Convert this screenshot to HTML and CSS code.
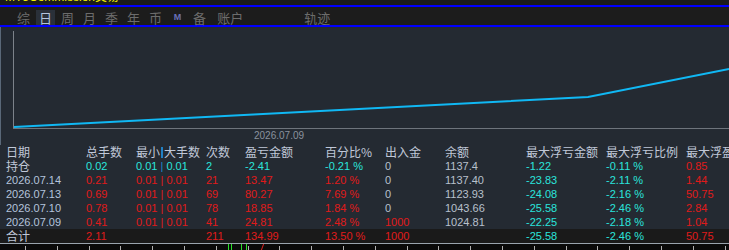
FILE: index.html
```html
<!DOCTYPE html>
<html lang="zh-CN">
<head>
    <meta charset="UTF-8">
    <title>账户轨迹</title>
    <link rel="stylesheet" href="styles.css">
</head>
<body>

    <div class="titlebar"><span class="title-text">MT5Commission交易</span></div>
    <div class="sep"></div>

    <!-- period tabs -->
    <div class="tabs">
        <span class="tab">综</span>
        <span class="tab active">日</span>
        <span class="tab">周</span>
        <span class="tab">月</span>
        <span class="tab">季</span>
        <span class="tab">年</span>
        <span class="tab">币</span>
        <span class="tab tab-m">M</span>
        <span class="tab">备</span>
        <span class="tab tab-acct">账户</span>
        <span class="tab tab-track">轨迹</span>
    </div>
    <div class="sep"></div>

    <!-- equity curve -->
    <div class="chart">
        <svg width="729" height="118" viewBox="0 0 729 118">
            <line x1="13.5" y1="4" x2="13.5" y2="101" stroke="#7c828a" stroke-width="1"/>
            <line x1="13" y1="101.5" x2="729" y2="101.5" stroke="#6e747c" stroke-width="1"/>
            <polyline points="14,100 588,70 729,42" fill="none" stroke="#10b8f4" stroke-width="2"/>
            <text x="254" y="112" class="axis-label">2026.07.09</text>
        </svg>
    </div>

    <!-- daily stats -->
    <div class="table">
        <div class="row head">
            <span>日期</span><span>总手数</span><span>最小<i class="bar">|</i>大手数</span><span>次数</span><span>盈亏金额</span>
            <span>百分比%</span><span>出入金</span><span>余额</span><span>最大浮亏金额</span><span>最大浮亏比例</span><span>最大浮盈金额</span>
        </div>
        <div class="row">
            <span class="cjk">持仓</span><span class="cy">0.02</span><span class="cy">0.01 <i class="bar">|</i> 0.01</span><span class="cy">2</span><span class="cy">-2.41</span>
            <span class="cy">-0.21 %</span><span class="gr">0</span><span class="gr">1137.4</span><span class="cy">-1.22</span><span class="cy">-0.11 %</span><span class="rd">0.85</span>
        </div>
        <div class="row">
            <span class="dt">2026.07.14</span><span class="rd">0.21</span><span class="rd">0.01 | 0.01</span><span class="rd">21</span><span class="rd">13.47</span>
            <span class="rd">1.20 %</span><span class="gr">0</span><span class="gr">1137.40</span><span class="cy">-23.83</span><span class="cy">-2.11 %</span><span class="rd">1.44</span>
        </div>
        <div class="row">
            <span class="dt">2026.07.13</span><span class="rd">0.69</span><span class="rd">0.01 | 0.01</span><span class="rd">69</span><span class="rd">80.27</span>
            <span class="rd">7.69 %</span><span class="gr">0</span><span class="gr">1123.93</span><span class="cy">-24.08</span><span class="cy">-2.16 %</span><span class="rd">50.75</span>
        </div>
        <div class="row">
            <span class="dt">2026.07.10</span><span class="rd">0.78</span><span class="rd">0.01 | 0.01</span><span class="rd">78</span><span class="rd">18.85</span>
            <span class="rd">1.84 %</span><span class="gr">0</span><span class="gr">1043.66</span><span class="cy">-25.58</span><span class="cy">-2.46 %</span><span class="rd">2.84</span>
        </div>
        <div class="row">
            <span class="dt">2026.07.09</span><span class="rd">0.41</span><span class="rd">0.01 | 0.01</span><span class="rd">41</span><span class="rd">24.81</span>
            <span class="rd">2.48 %</span><span class="rd">1000</span><span class="gr">1024.81</span><span class="cy">-22.25</span><span class="cy">-2.18 %</span><span class="rd">1.04</span>
        </div>
        <div class="row total">
            <span class="cjk">合计</span><span class="rd">2.11</span><span></span><span class="rd">211</span><span class="rd">134.99</span>
            <span class="rd">13.50 %</span><span class="rd">1000</span><span></span><span class="cy">-25.58</span><span class="cy">-2.46 %</span><span class="rd">50.75</span>
        </div>
    </div>

    <!-- time ruler -->
    <div class="ruler">
        <i class="mark green m1"></i>
        <i class="mark green m2"></i>
        <i class="mark green m3"></i>
        <i class="mark red m4"></i>
    </div>

</body>
</html>
```

FILE: styles.css
```css
html, body {
    margin: 0;
    padding: 0;
}
body {
    width: 729px;
    height: 250px;
    overflow: hidden;
    background: #242a32;
    font-family: "Liberation Sans", "Noto Sans CJK SC", sans-serif;
}
.titlebar {
    height: 5px;
    overflow: hidden;
    background: #1b1b1b;
    padding-left: 5px;
}
.title-text {
    display: block;
    margin-top: -10px;
    font-size: 12px;
    line-height: 14px;
    color: #f4f000;
}
.sep {
    height: 2px;
    background: #0000ff;
}
.tabs {
    height: 18px;
    background: #1c1c1c;
    display: flex;
    align-items: flex-end;
    gap: 3px;
    padding-left: 14px;
    font-family: "Noto Sans CJK SC", sans-serif;
    font-size: 13px;
}
.tab {
    height: 15px;
    line-height: 15px;
    padding: 0 3px;
    min-width: 13px;
    text-align: center;
    color: #6c6c6c;
    margin-bottom: 0;
}
.tab.active {
    background: #2a3039;
    color: #b4c4dc;
}
.tab-m {
    font-family: "Liberation Sans", sans-serif;
    font-size: 9px;
    font-weight: bold;
    color: #6a70b8;
}
.tab-acct {
    margin-left: 2px;
}
.tab-track {
    margin-left: 52px;
}
.chart {
    height: 118px;
    border-left: 1px solid #5a6878;
    margin-left: 0;
}
.chart svg {
    display: block;
    margin-left: -1px;
}
.axis-label {
    font-family: "Liberation Sans", sans-serif;
    font-size: 10px;
    fill: #8a929e;
}
.table {
    padding-left: 6px;
}
.row {
    display: grid;
    grid-template-columns: 80px 50px 70px 39px 80px 60px 60px 81px 80px 80px 80px;
    height: 14px;
    line-height: 14px;
    font-size: 11px;
    white-space: nowrap;
}
.row span {
    overflow: visible;
}
.row.head {
    font-family: "Noto Sans CJK SC", sans-serif;
    font-size: 12px;
    color: #c0c8d8;
}
.row.total {
    background: #1a1a1a;
    margin-left: -6px;
    padding-left: 6px;
}
.bar {
    font-style: normal;
    color: #1a8ad0;
}
.head .bar {
    display: inline-block;
    width: 2px;
    height: 11px;
    background: #2080c4;
    color: transparent;
    vertical-align: -1px;
    margin: 0 1px;
    overflow: hidden;
}
.cjk {
    font-family: "Noto Sans CJK SC", sans-serif;
    font-size: 12px;
    color: #c0c8d8;
}
.dt {
    color: #b4c4dc;
}
.rd {
    color: #e01a1a;
}
.cy {
    color: #2ae4dc;
}
.gr {
    color: #b8c0cc;
}
.ruler {
    position: relative;
    height: 6px;
    border-top: 1px solid #9aa4ae;
    background-color: #0a0a0a;
    background-image: repeating-linear-gradient(90deg, transparent 0, transparent 25px, #b0b0b0 25px, #b0b0b0 26px, transparent 26px, transparent 31.8px);
    background-size: 100% 4px;
    background-position: 0 2px;
    background-repeat: no-repeat;
}
.mark {
    position: absolute;
    bottom: 0;
    width: 1px;
    height: 6px;
}
.green {
    background: #28e028;
}
.red {
    background: #e02020;
    transform: skewX(-20deg);
}
.m1 { left: 228px; }
.m2 { left: 231px; }
.m3 { left: 241px; width: 4px; border-left: 1px solid #28e028; border-right: 1px solid #28e028; background: transparent; }
.m4 { left: 262px; }
```
